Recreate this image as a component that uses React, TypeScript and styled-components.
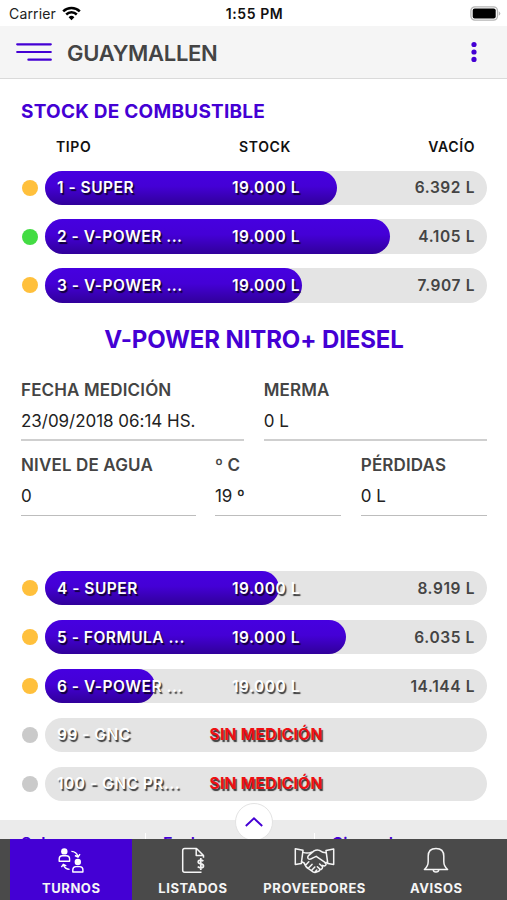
import React from 'react';
import styled, { createGlobalStyle } from 'styled-components';

const VIOLET = '#4400d4';

const GlobalStyle = createGlobalStyle`
  *, *::before, *::after { box-sizing: border-box; }
  body { margin: 0; background: #fff; font-family: Inter, "Liberation Sans", sans-serif; }
`;

const Screen = styled.div`
  display: flex;
  flex-direction: column;
  width: 507px;
  height: 900px;
  overflow: hidden;
  background: #fff;
`;

const StatusBar = styled.div`
  display: grid;
  grid-template-columns: 1fr auto 1fr;
  align-items: center;
  flex: none;
  height: 26px;
  padding: 0 6px 0 9px;
  font-size: 14px;
  color: #222;
`;

const Carrier = styled.div`
  display: flex;
  align-items: center;
  gap: 6px;
  letter-spacing: 0.15px;
`;

const Clock = styled.div`
  margin-left: -1px;
  font-weight: 600;
  letter-spacing: 0.6px;
  color: #111;
`;

const BatterySlot = styled.div`
  display: flex;
  justify-content: flex-end;
`;

const Header = styled.header`
  display: flex;
  align-items: center;
  flex: none;
  height: 53px;
  padding: 0 26px 0 16px;
  background: #f5f5f5;
  border-bottom: 1px solid #dadada;
`;

const Station = styled.h1`
  flex: 1;
  margin: 1px 0 0 15px;
  font-size: 22px;
  font-weight: 600;
  line-height: 28px;
  letter-spacing: -0.3px;
  color: #444;
`;

const Content = styled.main`
  flex: none;
  height: 741px;
  padding: 21px 20px 0 21px;
`;

const SectionTitle = styled.h2`
  margin: 0;
  font-size: 19px;
  font-weight: 700;
  line-height: 24px;
  letter-spacing: 0.24px;
  color: ${VIOLET};
`;

const ColumnTitles = styled.div`
  display: grid;
  grid-template-columns: 1fr auto 1fr;
  height: 46.5px;
  padding: 12px 12px 0 35px;
  font-size: 14px;
  font-weight: 600;
  line-height: 22px;
  letter-spacing: 0.6px;
  color: #111;

  & > :nth-child(2) { margin-right: 1px; }
  & > :first-child { margin-left: -23px; padding-left: 23px; }
  & > :last-child { text-align: right; }
`;

const TankList = styled.div`
  display: grid;
  grid-auto-rows: 34.4px;
  row-gap: 14.5px;
`;

const TankRow = styled.div`
  display: grid;
  grid-template-columns: 16px 1fr;
  align-items: center;
  column-gap: 8px;
`;

const Dot = styled.span<{ $color: string }>`
  width: 16px;
  height: 16px;
  margin-left: 0.5px;
  border-radius: 50%;
  background: ${(p) => p.$color};
`;

const Track = styled.div`
  display: grid;
  grid-template-columns: 1fr auto 1fr;
  align-items: center;
  height: 34.4px;
  border-radius: 18px;
  background: #e4e4e4;
  font-size: 15.5px;
  font-weight: 600;
  letter-spacing: 0.5px;
  white-space: nowrap;

  & > * { grid-row: 1; }
`;

const Fill = styled.div<{ $width: number }>`
  grid-column: 1 / -1;
  width: ${(p) => p.$width}px;
  height: 100%;
  border-radius: 18px;
  background: linear-gradient(180deg, #4600e0 0%, #4400d6 45%, #30009a 100%);
`;

const TankName = styled.span`
  grid-column: 1;
  padding-left: 12px;
  color: #fff;
  text-shadow: 1.5px 1.5px 1px rgba(0, 0, 0, 0.75);
`;

const Stock = styled.span<{ $missing?: boolean }>`
  grid-column: 2;
  font-weight: ${(p) => (p.$missing ? 700 : 600)};
  letter-spacing: ${(p) => (p.$missing ? 0.35 : 0.5)}px;
  color: ${(p) => (p.$missing ? '#ee0f12' : '#fff')};
  text-shadow: 1.5px 1.5px 1px rgba(0, 0, 0, 0.75);
`;

const Empty = styled.span`
  grid-column: 3;
  padding-right: 12px;
  text-align: right;
  letter-spacing: 0.6px;
  color: #444;
`;

const DetailTitle = styled.h3`
  margin: 21px 0 19px;
  font-size: 24px;
  font-weight: 700;
  line-height: 32px;
  letter-spacing: -0.12px;
  text-align: center;
  color: ${VIOLET};
`;

const FieldRow = styled.div<{ $columns: string; $line: number }>`
  display: grid;
  grid-template-columns: ${(p) => p.$columns};
  column-gap: 19.4px;
  height: 75px;

  & > * { border-bottom: ${(p) => p.$line}px solid ${(p) => (p.$line > 1 ? '#cfcfcf' : '#bdbdbd')}; }
`;

const Field = styled.div`
  height: 66px;
  padding-top: 3px;
`;

const Details = styled.section`
  height: 196.4px;
`;

const Label = styled.div`
  font-size: 17px;
  font-weight: 600;
  line-height: 24px;
  letter-spacing: 0.15px;
  color: #444;
`;

const Value = styled.div`
  padding-top: 7px;
  font-size: 17px;
  line-height: 24px;
  letter-spacing: -0.03px;
  color: #222;
`;

const Summary = styled.section`
  display: grid;
  grid-template-columns: repeat(3, 168.5px);
  position: relative;
  flex: none;
  height: 19px;
  padding-top: 13px;
  background: #ebebeb;
`;

const SummaryCell = styled.div`
  height: 6px;
  padding-left: 17px;
  margin-left: -23.5px;
  border-left: 1.5px solid #fff;
  font-size: 16px;
  font-weight: 600;
  line-height: 20px;
  color: ${VIOLET};

  &:first-child { margin-left: 0; padding-left: 21px; border-left: 0; }
`;

const Expand = styled.button`
  position: absolute;
  left: 235px;
  top: -17px;
  display: flex;
  align-items: center;
  justify-content: center;
  width: 38px;
  height: 38px;
  padding: 0;
  border: 1px solid #e3e3e3;
  border-radius: 50%;
  background: #fff;
`;

const Nav = styled.nav`
  display: grid;
  grid-template-columns: repeat(4, 121.7px);
  position: relative;
  flex: none;
  height: 61px;
  padding-left: 10.4px;
  background: #4a4a4a;
`;

const NavItem = styled.button<{ $active?: boolean }>`
  display: flex;
  flex-direction: column;
  align-items: center;
  padding: 8px 0 0;
  border: 0;
  background: ${(p) => (p.$active ? VIOLET : 'transparent')};
  font-family: inherit;
  font-size: 13px;
  font-weight: 700;
  line-height: 18px;
  letter-spacing: 0.58px;
  color: #f5f5f5;

  svg { flex: none; margin-bottom: 5px; }
`;

const WifiIcon = () => (
  <svg width="19" height="15" viewBox="0 0 19 15">
    <g fill="none" stroke="#000" strokeWidth="2.5">
      <path d="M1.2 5.4a11.8 11.8 0 0 1 16.6 0" />
      <path d="M4.2 8.5a7.6 7.6 0 0 1 10.6 0" />
    </g>
    <path d="M9.5 14.2 6.6 11.2a4.1 4.1 0 0 1 5.8 0z" fill="#000" />
  </svg>
);

const BatteryIcon = () => (
  <svg width="31" height="15" viewBox="0 0 31 15">
    <rect x="0.9" y="0.9" width="26.6" height="13.2" rx="4" fill="#fff" stroke="#b5b5b5" strokeWidth="1.3" />
    <rect x="2.7" y="2.6" width="23" height="9.8" rx="2" fill="#000" />
    <path d="M28.8 5.2q3 2.3 0 4.6z" fill="#b5b5b5" />
  </svg>
);

const MenuIcon = () => (
  <svg width="36" height="20" viewBox="0 0 36 20" stroke={VIOLET} strokeWidth="2.2" strokeLinecap="round">
    <path d="M1.2 2.3h33.6M1.2 10h33.6M12.4 17.7h22.4" />
  </svg>
);

const DotsIcon = () => (
  <svg width="14" height="22" viewBox="0 0 14 22" fill={VIOLET}>
    <circle cx="7" cy="3.5" r="2.6" />
    <circle cx="7" cy="11" r="2.6" />
    <circle cx="7" cy="18.4" r="2.6" />
  </svg>
);

const ChevronUp = () => (
  <svg width="20" height="12" viewBox="0 0 20 12" fill="none" stroke={VIOLET} strokeWidth="1.9">
    <path d="m1.8 10 8.2-7.6 8.2 7.6" />
  </svg>
);

const ShiftsIcon = () => (
  <svg width="26" height="27" viewBox="0 0 26 27" fill="none" stroke="#fff" strokeWidth="1.4">
    <circle cx="6.3" cy="4.4" r="3.2" fill="#fff" stroke="none" />
    <path d="M1.2 14.2v-2.1q0-3.3 3.1-3.3h4q3.3 0 3.3 3.3v2.1z" strokeLinejoin="round" />
    <circle cx="19.8" cy="15" r="3.2" fill="#fff" stroke="none" />
    <path d="M14.8 25v-2.2q0-3.2 3.1-3.2h3.9q3.1 0 3.1 3.2V25z" strokeLinejoin="round" />
    <path d="M13.4 4.4q5 .3 6.4 4.7M22 7.2l-2 2.8-3.1-1.5M11.6 22.4q-4.8-.2-6.1-4.4M3.4 20.2l1.9-2.8 3 1.4" />
  </svg>
);

const InvoiceIcon = () => (
  <svg width="24" height="27" viewBox="0 0 24 27" fill="none" stroke="#f5f5f5" strokeWidth="1.5">
    <path d="M20.5 25.2H3.7q-2 0-2-2V3.4q0-2 2-2h11.8l7 7.2v2.1M15.2 1.6v7h7" strokeLinejoin="round" />
    <path d="M22.4 14.2q-1.3-1-2.8-1-2.4.1-2.4 1.8 0 1.5 2.6 1.8 2.7.3 2.7 2.1 0 1.9-2.7 1.9-1.7 0-3.1-1.1M19.8 11v12" strokeWidth="1.7" />
  </svg>
);

const HandshakeIcon = () => (
  <svg width="41" height="27" viewBox="0 0 41 27" fill="none" stroke="#f5f5f5" strokeWidth="1.5" strokeLinejoin="round" strokeLinecap="round">
    <path d="M1.3 1.7 9 3.3 7.3 16.6l-6 .8zM39.7 2 32 3.6l1.8 13 5.9.8z" />
    <path d="M9 5.4q4.5 1.4 8.6-.3M32 5.8q-3.2 0-6.6-2.4-2.6-1-5.4.5l-5 4.2q-2.2 2.3-.6 3.7 1.9 1 4.6-.9l3.2-1.6 8.8 6.1q1.8 1.6.6 2.9-1.3 1.2-3 .1" />
    <path d="m7.6 14.8 2.6 1.2q1.3 4.2 5 6.2l4.2 3q1.9 1 3.6-.5M31.2 16l2.2-.7M23 24.7q2.4.2 2.8-2M25.6 22.8q2.6.2 3-2.8M12 17.8l2.8-3M15 20.6l3-3.2M18 23l2.8-3M21.2 24.8l1.6-1.8M23.4 19.8l2.8 2.6M25.6 17l3 2.8" />
  </svg>
);

const BellIcon = () => (
  <svg width="26" height="27" viewBox="0 0 26 27" fill="none" stroke="#f5f5f5" strokeWidth="1.5" strokeLinejoin="round">
    <path d="M1.4 22.5q3.8-3.3 3.8-8V9.2q0-7.7 7.8-7.7t7.8 7.7v5.3q0 4.7 3.8 8z" />
    <path d="M10.3 22.8a2.7 2.3 0 0 0 5.4 0" />
  </svg>
);

type Tank = { name: string; dot: string; fill?: number; stock?: string; empty?: string };

const AMBER = '#ffc03c';
const GREEN = '#43dc43';
const GREY = '#cacaca';

const upperTanks: Tank[] = [
  { name: '1 - SUPER', dot: AMBER, fill: 292, stock: '19.000 L', empty: '6.392 L' },
  { name: '2 - V-POWER ...', dot: GREEN, fill: 345, stock: '19.000 L', empty: '4.105 L' },
  { name: '3 - V-POWER ...', dot: AMBER, fill: 257, stock: '19.000 L', empty: '7.907 L' },
];

const lowerTanks: Tank[] = [
  { name: '4 - SUPER', dot: AMBER, fill: 234, stock: '19.000 L', empty: '8.919 L' },
  { name: '5 - FORMULA ...', dot: AMBER, fill: 301, stock: '19.000 L', empty: '6.035 L' },
  { name: '6 - V-POWER ...', dot: AMBER, fill: 110, stock: '19.000 L', empty: '14.144 L' },
  { name: '99 - GNC', dot: GREY },
  { name: '100 - GNC PR...', dot: GREY },
];

const Tanks = ({ items }: { items: Tank[] }) => (
  <TankList>
    {items.map((t) => (
      <TankRow key={t.name}>
        <Dot $color={t.dot} />
        <Track>
          {t.fill !== undefined && <Fill $width={t.fill} />}
          <TankName>{t.name}</TankName>
          <Stock $missing={!t.stock}>{t.stock ?? 'SIN MEDICIÓN'}</Stock>
          <Empty>{t.empty}</Empty>
        </Track>
      </TankRow>
    ))}
  </TankList>
);

const DataField = ({ label, value }: { label: string; value: string }) => (
  <Field>
    <Label>{label}</Label>
    <Value>{value}</Value>
  </Field>
);

export default function App() {
  return (
    <Screen>
      <GlobalStyle />
      <StatusBar>
        <Carrier>
          Carrier <WifiIcon />
        </Carrier>
        <Clock>1:55 PM</Clock>
        <BatterySlot>
          <BatteryIcon />
        </BatterySlot>
      </StatusBar>
      <Header>
        <MenuIcon />
        <Station>GUAYMALLEN</Station>
        <DotsIcon />
      </Header>
      <Content>
        <SectionTitle>STOCK DE COMBUSTIBLE</SectionTitle>
        <ColumnTitles>
          <span>TIPO</span>
          <span>STOCK</span>
          <span>VACÍO</span>
        </ColumnTitles>
        <Tanks items={upperTanks} />
        <DetailTitle>V-POWER NITRO+ DIESEL</DetailTitle>
        <Details>
          <FieldRow $columns="1fr 1fr" $line={2}>
            <DataField label="FECHA MEDICIÓN" value="23/09/2018 06:14 HS." />
            <DataField label="MERMA" value="0 L" />
          </FieldRow>
          <FieldRow $columns="174.5px 126.5px 126px" $line={1}>
            <DataField label="NIVEL DE AGUA" value="0" />
            <DataField label="º C" value="19 º" />
            <DataField label="PÉRDIDAS" value="0 L" />
          </FieldRow>
        </Details>
        <Tanks items={lowerTanks} />
      </Content>
      <Summary>
        <SummaryCell>Sobre</SummaryCell>
        <SummaryCell>Fecha</SummaryCell>
        <SummaryCell>Cierre de</SummaryCell>
        <Expand aria-label="Expandir">
          <ChevronUp />
        </Expand>
      </Summary>
      <Nav>
        <NavItem $active>
          <ShiftsIcon />
          TURNOS
        </NavItem>
        <NavItem>
          <InvoiceIcon />
          LISTADOS
        </NavItem>
        <NavItem>
          <HandshakeIcon />
          PROVEEDORES
        </NavItem>
        <NavItem>
          <BellIcon />
          AVISOS
        </NavItem>
      </Nav>
    </Screen>
  );
}
